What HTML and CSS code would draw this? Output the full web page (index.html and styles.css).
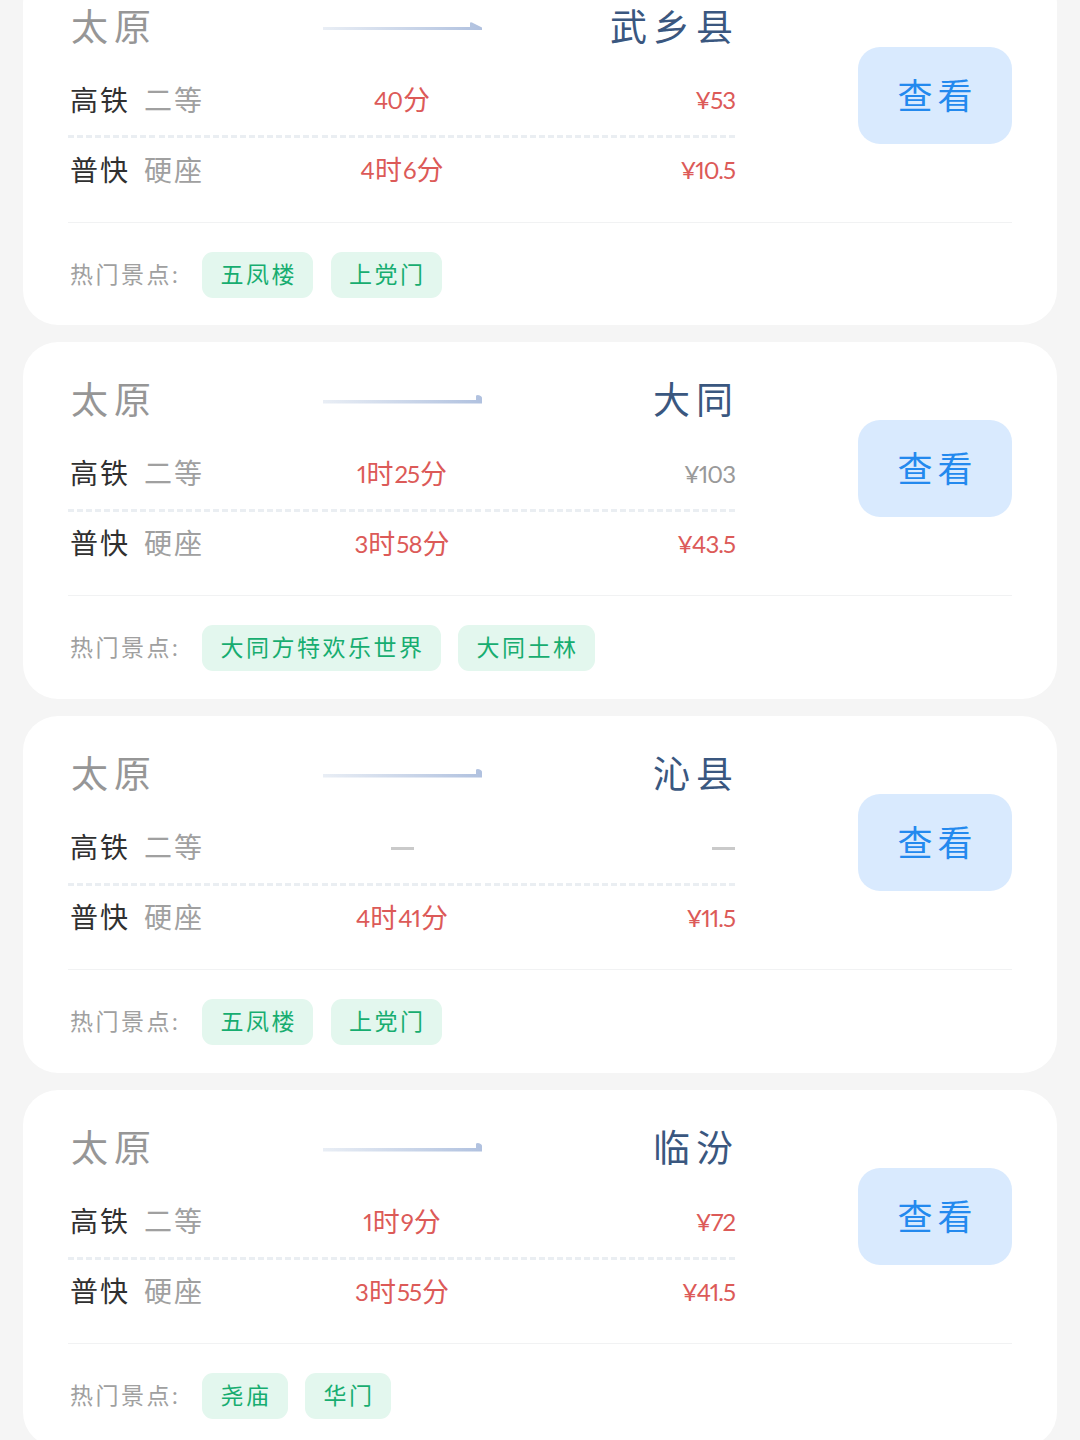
FILE: index.html
```html
<!DOCTYPE html>
<html lang="zh-CN">
  <head>
    <meta charset="UTF-8" />
    <meta name="viewport" content="width=device-width, initial-scale=1.0" />
    <title>太原出发</title>
    <link rel="stylesheet" href="styles.css">
  </head>
  <body>
    <div class="route-list">
      <div class="card">
        <div class="card-main">
          <div class="route">
            <div class="route-head">
              <div class="from">太原</div>
              <svg class="arrow" viewBox="0 0 160 10">
                <defs>
                  <linearGradient id="line-fade" gradientUnits="userSpaceOnUse" x1="0" y1="0" x2="160" y2="0">
                    <stop offset="0" stop-color="#e9eef5" />
                    <stop offset="1" stop-color="#b0c1df" />
                  </linearGradient>
                </defs>
                <path fill="url(#line-fade)" d="M0 5H147V1.2Q147 0 149 .5L159 5.5V8H0Z" />
              </svg>
              <div class="to">武乡县</div>
            </div>
            <div class="fare">
              <div class="train">高铁<span class="seat">二等</span></div>
              <div class="time">40<span>分</span></div>
              <div class="price">¥53</div>
            </div>
            <div class="dashes"></div>
            <div class="fare second">
              <div class="train">普快<span class="seat">硬座</span></div>
              <div class="time">4<span>时</span>6<span>分</span></div>
              <div class="price">¥10.5</div>
            </div>
          </div>
          <button class="view-btn">查看</button>
        </div>
        <div class="spots">
          <span class="spots-label">热门景点:</span>
          <span class="tag">五凤楼</span>
          <span class="tag">上党门</span>
        </div>
      </div>

      <div class="card">
        <div class="card-main">
          <div class="route">
            <div class="route-head">
              <div class="from">太原</div>
              <svg class="arrow" viewBox="0 0 160 10">
                <path fill="url(#line-fade)" d="M0 5H153V1Q153 0 155 0Q159 1 159 3V8.5H0Z" />
              </svg>
              <div class="to">大同</div>
            </div>
            <div class="fare">
              <div class="train">高铁<span class="seat">二等</span></div>
              <div class="time">1<span>时</span>25<span>分</span></div>
              <div class="price muted">¥103</div>
            </div>
            <div class="dashes"></div>
            <div class="fare second">
              <div class="train">普快<span class="seat">硬座</span></div>
              <div class="time">3<span>时</span>58<span>分</span></div>
              <div class="price">¥43.5</div>
            </div>
          </div>
          <button class="view-btn">查看</button>
        </div>
        <div class="spots">
          <span class="spots-label">热门景点:</span>
          <span class="tag">大同方特欢乐世界</span>
          <span class="tag">大同土林</span>
        </div>
      </div>

      <div class="card">
        <div class="card-main">
          <div class="route">
            <div class="route-head">
              <div class="from">太原</div>
              <svg class="arrow" viewBox="0 0 160 10">
                <path fill="url(#line-fade)" d="M0 5H153V1Q153 0 155 0Q159 1 159 3V8.5H0Z" />
              </svg>
              <div class="to">沁县</div>
            </div>
            <div class="fare">
              <div class="train">高铁<span class="seat">二等</span></div>
              <div class="time"><i class="none"></i></div>
              <div class="price"><i class="none"></i></div>
            </div>
            <div class="dashes"></div>
            <div class="fare second">
              <div class="train">普快<span class="seat">硬座</span></div>
              <div class="time">4<span>时</span>41<span>分</span></div>
              <div class="price">¥11.5</div>
            </div>
          </div>
          <button class="view-btn">查看</button>
        </div>
        <div class="spots">
          <span class="spots-label">热门景点:</span>
          <span class="tag">五凤楼</span>
          <span class="tag">上党门</span>
        </div>
      </div>

      <div class="card">
        <div class="card-main">
          <div class="route">
            <div class="route-head">
              <div class="from">太原</div>
              <svg class="arrow" viewBox="0 0 160 10">
                <path fill="url(#line-fade)" d="M0 5H153V1Q153 0 155 0Q159 1 159 3V8.5H0Z" />
              </svg>
              <div class="to">临汾</div>
            </div>
            <div class="fare">
              <div class="train">高铁<span class="seat">二等</span></div>
              <div class="time">1<span>时</span>9<span>分</span></div>
              <div class="price">¥72</div>
            </div>
            <div class="dashes"></div>
            <div class="fare second">
              <div class="train">普快<span class="seat">硬座</span></div>
              <div class="time">3<span>时</span>55<span>分</span></div>
              <div class="price">¥41.5</div>
            </div>
          </div>
          <button class="view-btn">查看</button>
        </div>
        <div class="spots">
          <span class="spots-label">热门景点:</span>
          <span class="tag">尧庙</span>
          <span class="tag">华门</span>
        </div>
      </div>
    </div>
  </body>
</html>
```

FILE: styles.css
```css
* {
  box-sizing: border-box;
}
body {
  margin: 0;
  height: 1440px;
  overflow: hidden;
  background-color: #f5f5f5;
  font-family: Lato, "KaiTi", "Noto Sans CJK SC", sans-serif;
}
/* list is scrolled a little, the first card is cut at the top */
.route-list {
  display: flex;
  flex-direction: column;
  gap: 17.4px;
  margin-top: -31.5px;
  padding: 0 23px;
}
.card {
  flex: none;
  height: 356.5px;
  padding: 30px 45px 0;
  background-color: #fff;
  border-radius: 35px;
}
.card-main {
  display: flex;
  justify-content: space-between;
  align-items: flex-start;
  height: 224px;
  border-bottom: 1px solid #f1f2f3;
}
.route {
  width: 667px;
}
.route-head,
.fare {
  display: grid;
  grid-template-columns: 255px 159px 1fr;
  align-items: center;
}
.route-head {
  height: 55px;
  margin-bottom: 10.5px;
}
.from,
.to {
  font-size: 37px;
  line-height: 55px;
  letter-spacing: 6px;
}
.from {
  padding-left: 3px;
  color: #969696;
}
.to {
  margin-right: -4px;
  text-align: right;
  color: #3a577f;
}
.arrow {
  display: block;
  width: 160px;
  height: 10px;
  margin-top: 1px;
}
.fare {
  height: 71px;
}
.fare.second {
  height: 63px;
}
.train {
  margin-top: -2px;
  padding-left: 2px;
  font-size: 28px;
  letter-spacing: 2px;
  color: #303030;
}
.seat {
  margin-left: 14px;
  color: #a0a0a0;
}
.time,
.price {
  display: flex;
  align-items: center;
  font-size: 24px;
  font-variant-numeric: proportional-nums;
  letter-spacing: -1px;
  color: #dc5a58;
}
.time {
  justify-content: center;
}
.time span {
  margin: -2px 1px 0;
  font-size: 27px;
  letter-spacing: 0;
}
.price {
  justify-content: flex-end;
}
.price.muted {
  color: #999;
}
.none {
  width: 23px;
  height: 3px;
  margin-top: 2px;
  background-color: #cacaca;
}
.dashes {
  height: 3px;
  background: repeating-linear-gradient(to right, #eaeef2 0 6px, transparent 6px 9.055px);
}
.view-btn {
  width: 154px;
  height: 97px;
  margin-top: 48px;
  padding: 0 0 4px 5px;
  border: none;
  border-radius: 22px;
  background-color: #d9eafe;
  color: #2389ee;
  font-family: inherit;
  font-size: 35px;
  letter-spacing: 5px;
}
.spots {
  display: flex;
  align-items: center;
  gap: 17.5px;
  height: 46px;
  margin-top: 29px;
  font-size: 23px;
  letter-spacing: 2.5px;
}
.spots-label {
  width: 116.5px;
  padding: 0 0 4px 2px;
  white-space: nowrap;
  color: #a0a0a0;
}
.tag {
  height: 46px;
  padding: 0 16px 0 18.5px;
  line-height: 45px;
  border-radius: 11px;
  background-color: #e3f7ee;
  color: #17ad70;
}
```
